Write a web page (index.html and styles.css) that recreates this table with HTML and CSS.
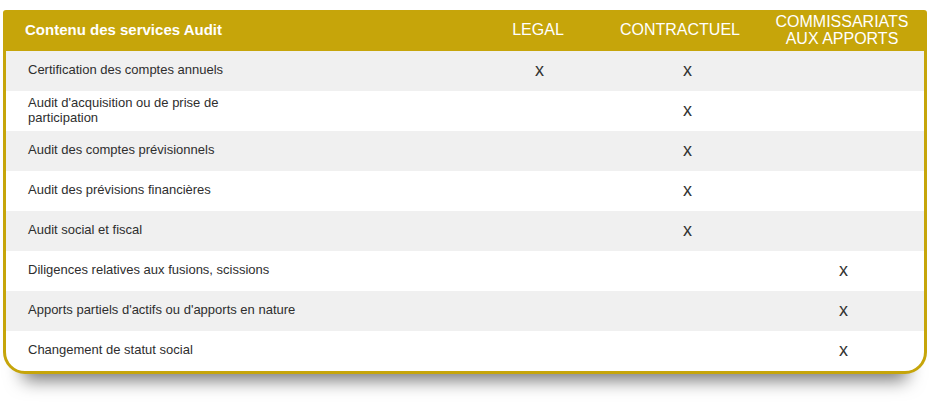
FILE: index.html
```html
<!DOCTYPE html>
<html lang="fr">
<head>
<meta charset="utf-8">
<title>Contenu des services Audit</title>
<link rel="stylesheet" href="styles.css">
</head>
<body>
<div class="panel">
  <div class="row head">
    <div class="cell label">Contenu des services Audit</div>
    <div class="cell col">LEGAL</div>
    <div class="cell col col-contr">CONTRACTUEL</div>
    <div class="cell col col-comm">COMMISSARIATS<br>AUX APPORTS</div>
  </div>
  <div class="row">
    <div class="cell label">Certification des comptes annuels</div>
    <div class="cell mark">x</div>
    <div class="cell mark">x</div>
    <div class="cell mark"></div>
  </div>
  <div class="row">
    <div class="cell label">Audit d'acquisition ou de prise de<br>participation</div>
    <div class="cell mark"></div>
    <div class="cell mark">x</div>
    <div class="cell mark"></div>
  </div>
  <div class="row">
    <div class="cell label">Audit des comptes prévisionnels</div>
    <div class="cell mark"></div>
    <div class="cell mark">x</div>
    <div class="cell mark"></div>
  </div>
  <div class="row">
    <div class="cell label">Audit des prévisions financières</div>
    <div class="cell mark"></div>
    <div class="cell mark">x</div>
    <div class="cell mark"></div>
  </div>
  <div class="row">
    <div class="cell label">Audit social et fiscal</div>
    <div class="cell mark"></div>
    <div class="cell mark">x</div>
    <div class="cell mark"></div>
  </div>
  <div class="row">
    <div class="cell label">Diligences relatives aux fusions, scissions</div>
    <div class="cell mark"></div>
    <div class="cell mark"></div>
    <div class="cell mark">x</div>
  </div>
  <div class="row">
    <div class="cell label">Apports partiels d'actifs ou d'apports en nature</div>
    <div class="cell mark"></div>
    <div class="cell mark"></div>
    <div class="cell mark">x</div>
  </div>
  <div class="row">
    <div class="cell label">Changement de statut social</div>
    <div class="cell mark"></div>
    <div class="cell mark"></div>
    <div class="cell mark">x</div>
  </div>
</div>
</body>
</html>
```

FILE: styles.css
```css
html, body {
  margin: 0;
  padding: 0;
  background: #ffffff;
}

body {
  font-family: "Liberation Sans", Arial, sans-serif;
  color: #333333;
  padding-bottom: 30px;
}

.panel {
  box-sizing: border-box;
  width: 924px;
  margin: 10px 0 0 3px;
  border: 3px solid #c6a50a;
  border-radius: 3px 3px 22px 22px;
  background: #ffffff;
  overflow: hidden;
  box-shadow: 0 26px 18px -20px rgba(0, 0, 0, 0.55);
}

.row {
  display: grid;
  grid-template-columns: 458px 148px 148px 164px;
  height: 40px;
}

.row:nth-child(even) {
  background: #f0f0f0;
}

.row.head {
  height: 38px;
  background: #c6a50a;
  color: #ffffff;
}

.cell {
  display: flex;
  align-items: center;
  box-sizing: border-box;
}

.label {
  padding: 0 0 3px 22px;
  font-size: 13px;
  line-height: 15px;
  color: #2e2e2e;
}

.head .label {
  padding: 0 0 4px 19px;
  font-size: 15px;
  font-weight: bold;
  line-height: 18px;
  color: #ffffff;
}

.col {
  justify-content: center;
  text-align: center;
  padding-bottom: 3px;
  font-size: 16px;
  line-height: 16.5px;
}

.col-contr {
  padding-right: 12px;
}

.mark {
  justify-content: center;
  padding: 0 0 2px 3px;
  font-size: 18px;
  line-height: 20px;
  color: #333333;
}
```
